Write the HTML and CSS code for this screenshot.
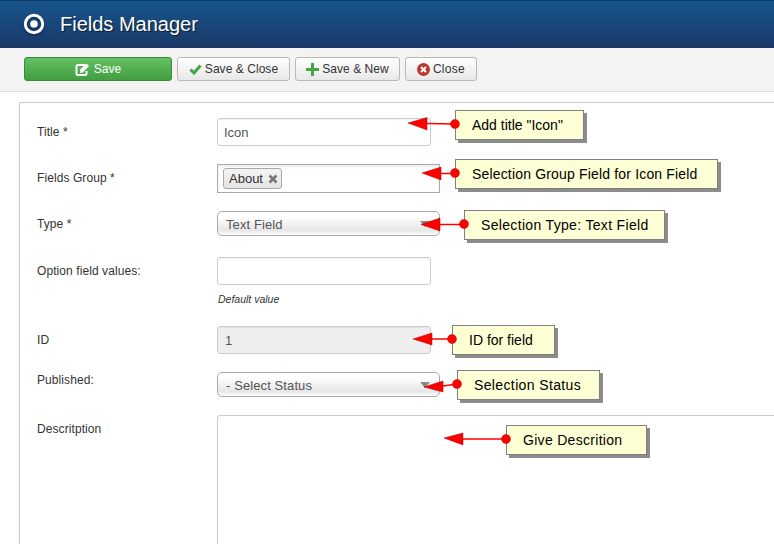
FILE: index.html
```html
<!DOCTYPE html>
<html lang="en">
<head>
<meta charset="utf-8">
<title>Fields Manager</title>
<link rel="stylesheet" href="styles.css">
</head>
<body>
<header class="header">
  <svg class="logo" width="22" height="22" viewBox="0 0 22 22"><circle cx="11" cy="11" r="8.700" fill="none" stroke="#fff" stroke-width="3"/><circle cx="11" cy="11" r="3.800" fill="#fff"/></svg>
  <h1 class="title">Fields Manager</h1>
</header>
<div class="toolbar">
  <button class="btn btn-save"><svg width="15" height="13" viewBox="0 0 15 13"><path d="M10 2H3a1.500 1.500 0 0 0-1.500 1.500v7A1.500 1.500 0 0 0 3 12h7a1.500 1.500 0 0 0 1.500-1.500V8" fill="none" stroke="#fff" stroke-width="2"/><path d="M5 6.500 11.500 0.500 14 3 8 9.500 5 10z" fill="#fff"/></svg>Save</button>
  <button class="btn btn-close-save"><svg width="13" height="11" viewBox="0 0 13 11"><path d="M1.500 5.500 5 9 11.500 1.500" fill="none" stroke="#46a546" stroke-width="3"/></svg>Save &amp; Close</button>
  <button class="btn btn-new"><svg width="13" height="13" viewBox="0 0 13 13"><path d="M5 0h3v5h5v3H8v5H5V8H0V5h5z" fill="#46a546"/></svg>Save &amp; New</button>
  <button class="btn btn-close"><svg width="13" height="13" viewBox="0 0 13 13"><circle cx="6.500" cy="6.500" r="6.500" fill="#bd362f"/><path d="M4 4 9 9M9 4 4 9" stroke="#fff" stroke-width="2"/></svg>Close</button>
</div>
<main class="panel">
  <div class="row">
    <label class="label">Title *</label>
    <div class="field input">Icon</div>
  </div>
  <div class="row">
    <label class="label label-up">Fields Group *</label>
    <div class="field chosen"><span class="tag">About<svg class="tag-x" width="10" height="10" viewBox="0 0 10 10"><path d="M1.500 1.500 8.500 8.500M8.500 1.500 1.500 8.500" stroke="#777" stroke-width="2.600"/></svg></span></div>
  </div>
  <div class="row row-wide">
    <label class="label">Type *</label>
    <div class="field select">Text Field<span class="caret"></span></div>
  </div>
  <div class="row row-option row-wide">
    <label class="label label-option">Option field values:</label>
    <div class="stack">
      <div class="field input"></div>
      <div class="help">Default value</div>
    </div>
  </div>
  <div class="row">
    <label class="label">ID</label>
    <div class="field input input-disabled">1</div>
  </div>
  <div class="row">
    <label class="label label-top">Published:</label>
    <div class="field select">- Select Status<span class="caret"></span></div>
  </div>
  <div class="row row-last">
    <label class="label label-desc">Descritption</label>
    <div class="field textarea"></div>
  </div>
</main>

<div class="note note-title">Add title "Icon"</div>
<div class="note note-group">Selection Group Field for Icon Field</div>
<div class="note note-type">Selection Type: Text Field</div>
<div class="note note-id">ID for field</div>
<div class="note note-status">Selection Status</div>
<div class="note note-desc">Give Descrition</div>
<svg class="arrows" width="774" height="544" viewBox="0 0 774 544">
  <g class="arrow">
    <path d="M427 123.500 455 124"/><polygon points="408,123 427,117.500 427,130"/><circle cx="455" cy="124" r="4.500"/>
    <path d="M441 173.500H455"/><polygon points="422,173 441,167 441,180"/><circle cx="455" cy="173" r="4.500"/>
    <path d="M440 224.500H464"/><polygon points="421,224.500 440,218 440,231"/><circle cx="464" cy="224" r="4.500"/>
    <path d="M432 339H452"/><polygon points="413,339 432,333 432,345"/><circle cx="452" cy="339" r="4.500"/>
    <path d="M443 386 457 384"/><polygon points="424,387 443,381 443,392"/><circle cx="457" cy="384" r="4.500"/>
    <path d="M463 439 506 439"/><polygon points="444,438 463,433 463,445"/><circle cx="506" cy="439" r="4.500"/>
  </g>
</svg>
</body>
</html>
```
FILE: styles.css
```css
* { box-sizing: border-box; }
html, body { margin: 0; height: 544px; overflow: hidden; background: #fff; }
body { font-family: "Liberation Sans", Arial, sans-serif; font-size: 12px; color: #333; position: relative; }

.header {
  height: 48px;
  display: flex;
  align-items: center;
  padding: 0 0 1px 23px;
  background: linear-gradient(#17558d, #1a3867);
  border-top: 1px solid #123a66;
}
.logo { filter: drop-shadow(0 1px 1px rgba(0,0,0,.5)); }
.title { margin: 0 0 0 15px; font-size: 20px; font-weight: 400; color: #fff; text-shadow: 1px 1px 1px rgba(0,0,0,.6); }

.toolbar {
  height: 44px;
  display: flex;
  align-items: flex-start;
  gap: 5px;
  padding: 9px 0 0 24px;
  background: #f3f3f3;
  border-bottom: 1px solid #dcdcdc;
}
.btn {
  height: 24px;
  display: flex;
  align-items: center;
  justify-content: center;
  gap: 3px;
  padding: 0;
  font: 12px "Liberation Sans", Arial, sans-serif;
  letter-spacing: .05px;
  color: #333;
  background: linear-gradient(#fff, #e8e8e8);
  border: 1px solid #b9b9b9;
  border-radius: 3px;
}
.btn-save { width: 148px; color: #fff; gap: 4px; background: linear-gradient(#63c063, #419e41); border-color: #3a8a3a; }
.btn-close-save { width: 113px; }
.btn-new { width: 105px; }
.btn-close { width: 72px; letter-spacing: .3px; }

.panel {
  width: 755px;
  height: 442px;
  margin: 10px 0 0 19px;
  padding: 15px 0 0 17px;
  border: 1px solid #ccc;
  border-width: 1px 0 0 1px;
}
.row { display: flex; align-items: center; margin-bottom: 18px; }
.row-wide { margin-bottom: 21px; }
.row-option { align-items: flex-start; }
.row-last { margin-bottom: 0; }
.label { width: 180px; flex: none; color: #333; letter-spacing: .08px; }
.label-up { padding-bottom: 2px; }
.label-option { padding-top: 7px; }
.label-top { align-self: flex-start; padding-top: 1px; }
.label-desc { align-self: flex-start; padding-top: 7px; }
.stack { display: flex; flex-direction: column; }
.help { height: 12px; margin-top: 8px; padding-left: 1px; font-size: 10.500px; line-height: 12px; font-style: italic; }

.field { color: #555; display: flex; align-items: center; font-size: 13px; }
.input { width: 214px; height: 28px; padding-left: 6px; border: 1px solid #ccc; border-radius: 3px; box-shadow: inset 0 1px 1px rgba(0,0,0,.05); }
.input-disabled { background: #eee; padding-left: 7px; }
.chosen { width: 223px; height: 29px; padding-left: 5px; border: 1px solid #aaa; box-shadow: inset 0 2px 3px rgba(0,0,0,.08); }
.tag { display: flex; align-items: center; height: 21px; padding: 0 3px 0 5px; color: #333; background: linear-gradient(#f4f4f4, #e4e4e4); border: 1px solid #aaa; border-radius: 3px; }
.tag-x { margin-left: 5px; }
.select {
  position: relative;
  width: 223px;
  height: 25px;
  padding: 1px 0 0 8px;
  letter-spacing: .1px;
  border: 1px solid #aaa;
  border-radius: 5px;
  background: linear-gradient(#fff 20%, #f0f0f0 55%, #e6e6e6 80%, #fff);
}
.caret { position: absolute; right: 9px; top: 9px; border: 5px solid transparent; border-top: 6px solid #888; border-bottom: 0; }
.textarea { width: 557px; height: 129px; border: 1px solid #ccc; border-width: 1px 0 0 1px; border-top-left-radius: 3px; }

.arrows { position: absolute; left: 0; top: 0; }
.arrow path { fill: none; stroke: #f00; stroke-width: 1.500; }
.arrow polygon { fill: #f00; stroke: #a00; stroke-width: .5; }
.arrow circle { fill: #f00; stroke: #c00; stroke-width: .5; }

.note {
  position: absolute;
  height: 30px;
  display: flex;
  align-items: center;
  padding-left: 16px;
  font-size: 14px;
  letter-spacing: .17px;
  color: #000;
  background: #ffffd5;
  border: 1px solid #808080;
  box-shadow: 3px 3px 0 #8c8c8c;
}
.note-title { left: 455px; top: 110px; width: 129px; letter-spacing: 0; }
.note-group { left: 455px; top: 159px; width: 263px; }
.note-type { left: 464px; top: 210px; width: 201px; letter-spacing: .33px; }
.note-id { left: 452px; top: 325px; width: 103px; letter-spacing: 0; }
.note-status { left: 457px; top: 370px; width: 143px; letter-spacing: .37px; }
.note-desc { left: 506px; top: 425px; width: 141px; letter-spacing: .3px; }
```
